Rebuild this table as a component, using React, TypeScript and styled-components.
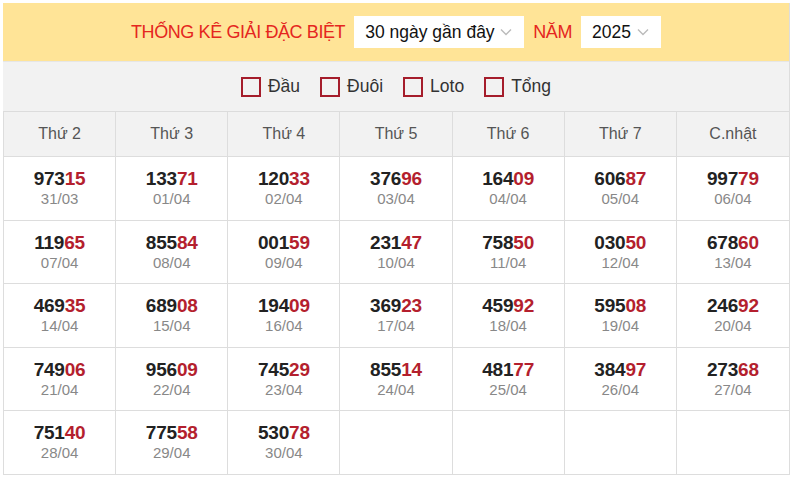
import React from 'react'
import styled, { createGlobalStyle } from 'styled-components'

const GlobalStyle = createGlobalStyle`
  body {
    margin: 0;
    background: #fff;
    font-family: "Liberation Sans", Arial, sans-serif;
  }
`

type Result = { number: string; date: string }

const days = ['Thứ 2', 'Thứ 3', 'Thứ 4', 'Thứ 5', 'Thứ 6', 'Thứ 7', 'C.nhật']

const results: Result[] = [
  { number: '97315', date: '31/03' },
  { number: '13371', date: '01/04' },
  { number: '12033', date: '02/04' },
  { number: '37696', date: '03/04' },
  { number: '16409', date: '04/04' },
  { number: '60687', date: '05/04' },
  { number: '99779', date: '06/04' },
  { number: '11965', date: '07/04' },
  { number: '85584', date: '08/04' },
  { number: '00159', date: '09/04' },
  { number: '23147', date: '10/04' },
  { number: '75850', date: '11/04' },
  { number: '03050', date: '12/04' },
  { number: '67860', date: '13/04' },
  { number: '46935', date: '14/04' },
  { number: '68908', date: '15/04' },
  { number: '19409', date: '16/04' },
  { number: '36923', date: '17/04' },
  { number: '45992', date: '18/04' },
  { number: '59508', date: '19/04' },
  { number: '24692', date: '20/04' },
  { number: '74906', date: '21/04' },
  { number: '95609', date: '22/04' },
  { number: '74529', date: '23/04' },
  { number: '85514', date: '24/04' },
  { number: '48177', date: '25/04' },
  { number: '38497', date: '26/04' },
  { number: '27368', date: '27/04' },
  { number: '75140', date: '28/04' },
  { number: '77558', date: '29/04' },
  { number: '53078', date: '30/04' },
]

const filters = ['Đầu', 'Đuôi', 'Loto', 'Tổng']

const Chevron: React.FC = () => (
  <svg width="12" height="8" viewBox="0 0 12 8">
    <path d="M1 1.5 L6 6.5 L11 1.5" fill="none" stroke="#bbb" strokeWidth="1.4" />
  </svg>
)

const App: React.FC = () => {
  const cells: (Result | null)[] = [...results]
  while (cells.length % 7 !== 0) cells.push(null)

  return (
    <>
      <GlobalStyle />
      <Wrapper>
        <Header>
          <Title>THỐNG KÊ GIẢI ĐẶC BIỆT</Title>
          <Select $width={170}>
            30 ngày gần đây
            <Chevron />
          </Select>
          <Title>NĂM</Title>
          <Select $width={80}>
            2025
            <Chevron />
          </Select>
        </Header>
        <FilterBar>
          {filters.map((f) => (
            <FilterItem key={f}>
              <Box />
              {f}
            </FilterItem>
          ))}
        </FilterBar>
        <Grid>
          {days.map((d) => (
            <HeadCell key={d}>{d}</HeadCell>
          ))}
          {cells.map((c, i) => (
            <Cell key={i}>
              {c && (
                <>
                  <Number>
                    {c.number.slice(0, 3)}
                    <Tail>{c.number.slice(3)}</Tail>
                  </Number>
                  <DateText>{c.date}</DateText>
                </>
              )}
            </Cell>
          ))}
        </Grid>
      </Wrapper>
    </>
  )
}

const Wrapper = styled.div`
  width: 786px;
  margin: 3px;
  border-right: 1px solid #ddd;
`

const Header = styled.div`
  height: 58px;
  background: #ffe497;
  display: flex;
  align-items: center;
  justify-content: center;
  gap: 9px;
  box-sizing: border-box;
`

const Title = styled.span`
  color: #e52620;
  font-size: 18px;
  letter-spacing: -0.4px;
`

const Select = styled.div<{ $width: number }>`
  width: ${({ $width }) => $width}px;
  height: 32px;
  background: #fff;
  display: flex;
  align-items: center;
  justify-content: space-between;
  padding: 0 12px 0 11px;
  box-sizing: border-box;
  font-size: 17.5px;
  color: #111;
`

const FilterBar = styled.div`
  height: 51px;
  background: #f2f2f2;
  border-top: 1px solid #e6e6e6;
  border-bottom: 1px solid #dcdcdc;
  box-sizing: border-box;
  display: flex;
  align-items: center;
  justify-content: center;
  gap: 20px;
`

const FilterItem = styled.label`
  display: flex;
  align-items: center;
  gap: 7px;
  font-size: 17.5px;
  color: #333;
`

const Box = styled.span`
  width: 20px;
  height: 20px;
  border: 2px solid #a51d2b;
  box-sizing: border-box;
`

const Grid = styled.div`
  display: grid;
  grid-template-columns: repeat(7, 1fr);
  border-left: 1px solid #ddd;
`

const HeadCell = styled.div`
  height: 45px;
  background: #f2f2f2;
  border-right: 1px solid #ddd;
  border-bottom: 1px solid #ddd;
  box-sizing: border-box;
  display: flex;
  align-items: center;
  justify-content: center;
  font-size: 16px;
  color: #555;
  &:nth-child(7) {
    border-right: none;
  }
`

const Cell = styled.div`
  height: 63.6px;
  border-right: 1px solid #ddd;
  border-bottom: 1px solid #ddd;
  box-sizing: border-box;
  display: flex;
  flex-direction: column;
  align-items: center;
  padding-top: 11px;
  &:nth-child(7n) {
    border-right: none;
  }
`

const Number = styled.div`
  font-size: 19px;
  font-weight: bold;
  color: #222;
  line-height: 22px;
  letter-spacing: -0.2px;
`

const Tail = styled.span`
  color: #b41f2e;
`

const DateText = styled.div`
  font-size: 15px;
  color: #888;
  line-height: 18px;
`

export default App
